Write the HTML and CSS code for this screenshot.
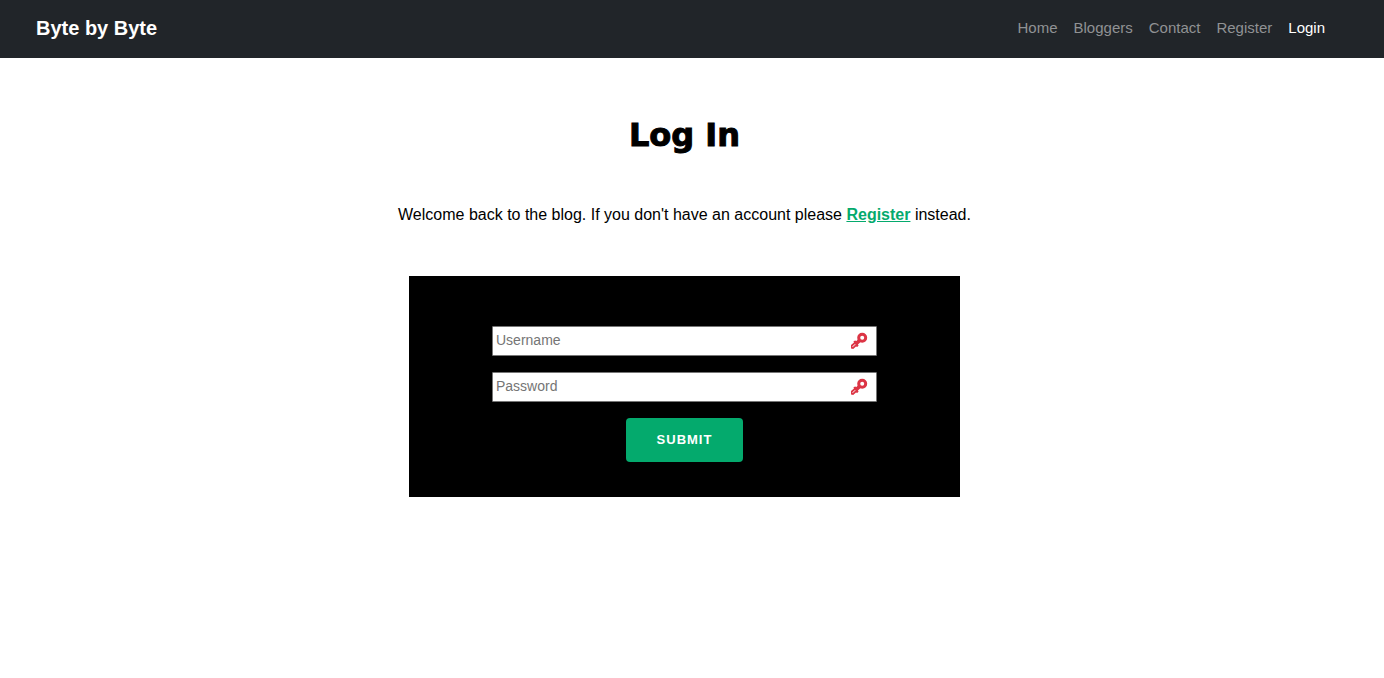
FILE: index.html
```html
<!DOCTYPE html>
<html lang="en">
<head>
  <meta charset="utf-8">
  <meta name="viewport" content="width=device-width, initial-scale=1">
  <title>Log In - Byte by Byte</title>
  <link rel="stylesheet" href="styles.css">
</head>
<body>
  <header class="navbar">
    <a class="brand" href="#">Byte by Byte</a>
    <nav class="nav-links">
      <a class="nav-link" href="#">Home</a>
      <a class="nav-link" href="#">Bloggers</a>
      <a class="nav-link" href="#">Contact</a>
      <a class="nav-link" href="#">Register</a>
      <a class="nav-link active" href="#" aria-current="page">Login</a>
    </nav>
  </header>
  <main class="content">
    <h1 class="title">Log In</h1>
    <p class="intro">Welcome back to the blog. If you don't have an account please <a class="register-link" href="#">Register</a> instead.</p>
    <form class="login-form">
      <div class="field">
        <input class="text-input" type="text" name="username" placeholder="Username" aria-label="Username">
        <svg class="key-icon" viewBox="0 0 18 18" aria-hidden="true">
          <circle cx="12.2" cy="5.8" r="3.5"/>
          <path d="M8.6 6.8 11.2 9.4 7.9 12.6 8.6 13.6 7.2 15 6 14.4 3.2 17 1 16.6V13L4 10.4 3.4 9.6 5 8.4 6.4 9Z"/>
          <path class="key-groove" d="M2.6 14.8 5.2 12.2"/>
        </svg>
      </div>
      <div class="field">
        <input class="text-input" type="password" name="password" placeholder="Password" aria-label="Password">
        <svg class="key-icon" viewBox="0 0 18 18" aria-hidden="true">
          <circle cx="12.2" cy="5.8" r="3.5"/>
          <path d="M8.6 6.8 11.2 9.4 7.9 12.6 8.6 13.6 7.2 15 6 14.4 3.2 17 1 16.6V13L4 10.4 3.4 9.6 5 8.4 6.4 9Z"/>
          <path class="key-groove" d="M2.6 14.8 5.2 12.2"/>
        </svg>
      </div>
      <button class="submit" type="submit">SUBMIT</button>
    </form>
  </main>
</body>
</html>
```
FILE: styles.css
```css
* {
  box-sizing: border-box;
}

body {
  margin: 0;
  background: #fff;
  color: #000;
  font: 16px/24px "Liberation Sans", Arial, sans-serif;
}

.navbar {
  display: flex;
  align-items: center;
  justify-content: space-between;
  min-height: 58px;
  padding: 8px 51px 10px 36px;
  background: #212529;
}

.brand {
  color: #fff;
  font-size: 20px;
  font-weight: 700;
  line-height: 32px;
  text-decoration: none;
}

.nav-links {
  display: flex;
  flex-wrap: wrap;
}

.nav-link {
  padding: 8px;
  color: #909294;
  font-size: 15px;
  text-decoration: none;
}

.nav-link.active {
  color: #fff;
}

.content {
  display: flex;
  flex-direction: column;
  align-items: center;
  padding: 53px 15px 48px 0;
}

.title {
  margin: 0 0 44px;
  font: 700 32px/48px "DejaVu Sans", "Arial Black", sans-serif;
  -webkit-text-stroke: 1px #000;
}

.intro {
  margin: 0 0 49px;
  text-align: center;
}

.register-link {
  color: #04aa6d;
  font-weight: 700;
}

.login-form {
  display: flex;
  flex-direction: column;
  align-items: center;
  gap: 16px;
  width: 100%;
  max-width: 551px;
  padding: 50px 20px 35px;
  background: #000;
}

.field {
  position: relative;
  width: 100%;
  max-width: 385px;
}

.text-input {
  display: block;
  width: 100%;
  height: 30px;
  padding: 0 36px 2px 3px;
  border: 1px solid #767676;
  border-radius: 1px;
  background: #fff;
  font: 14px "Liberation Sans", Arial, sans-serif;
}

.text-input::placeholder {
  color: #757575;
}

.key-icon {
  position: absolute;
  top: 6px;
  right: 9px;
  width: 18px;
  height: 18px;
  fill: #dc3545;
}

.key-icon circle {
  fill: #fff;
  stroke: #dc3545;
  stroke-width: 3;
}

.key-icon .key-groove {
  stroke: #fff;
  stroke-width: 1;
}

.submit {
  min-width: 117px;
  padding: 10px 30px;
  border: 0;
  border-radius: 4px;
  background: #04aa6d;
  color: #fff;
  font: 700 13px/24px "Liberation Sans", Arial, sans-serif;
  letter-spacing: 1px;
  cursor: pointer;
}
```
